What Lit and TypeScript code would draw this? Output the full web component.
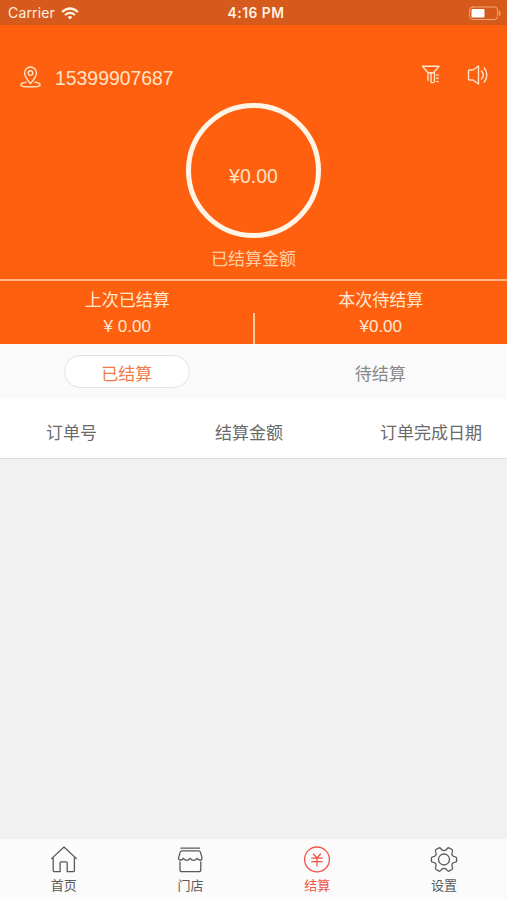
import { LitElement, html, css, svg } from "lit";
import { customElement, state } from "lit/decorators.js";
import { classMap } from "lit/directives/class-map.js";

const NAV = [
  { label: "首页", icon: svg`<path d="M1.600 13.600 14 2l12.400 11.600M3.200 12.200v13.200q0 1.300 1.300 1.300h5.600V17.800q0-1 1-1h5.100q1 0 1 1v8.900h5.900q1.300 0 1.300-1.300V12.200"/>` },
  { label: "门店", icon: svg`<path d="M4 3.200h18.500M5 5.800h16.600q1.400 0 1.800 1.300l1.500 5.300q.6 2.500-1.600 2.600-2.200.2-3.300-1.700-1.500 2-3.400 2t-3.400-2q-1.500 2-3.400 2t-3.400-2q-1.200 1.900-3.200 1.700-2.100-.2-1.500-2.600l1.500-5.300q.4-1.300 1.800-1.300zM3 17v7.800q0 1.900 1.900 1.900h17q1.900 0 1.900-1.900V17"/>` },
  { label: "结算", icon: svg`<circle cx="14" cy="14.400" r="12.400"/><path d="M10.500 9l3.500 4L17.500 9M8.700 13.200h10.600M8.700 16.600h10.600M14 13.200v7.600"/>` },
  { label: "设置", icon: svg`<circle cx="14" cy="14.500" r="5.500"/><path d="M8.600 3.100Q9.800 2.300 10.800 3.600 12 5.700 14 5.700T17.200 3.600Q18.200 2.300 19.400 3.100L21.900 4.500Q23 5.300 22.400 6.800 21.300 8.900 22.300 10.400T25.500 11.900Q26.600 12.100 26.600 13.300V15.700Q26.600 16.900 25.500 17.100 23.300 17.100 22.300 18.600T22.400 22.200Q23 23.700 21.900 24.500L19.400 25.900Q18.200 26.700 17.200 25.400 16 23.300 14 23.300T10.800 25.400Q9.800 26.700 8.600 25.900L6.100 24.500Q5 23.700 5.600 22.200 6.700 20.100 5.700 18.600T2.500 17.100Q1.400 16.900 1.400 15.700V13.300Q1.400 12.100 2.500 11.900 4.700 11.900 5.700 10.400T5.600 6.800Q5 5.300 6.100 4.500Z"/>` },
];

@customElement("app-root")
export class AppRoot extends LitElement {
  @state() private tab = 0;
  @state() private page = 2;

  static styles = css`
    :host {
      display: flex;
      flex-direction: column;
      height: 900px;
      background: #f1f1f1;
      font-family: "Liberation Sans", "Noto Sans CJK SC", sans-serif;
      color: #6a6a6a;
      overflow: hidden;
    }
    svg { display: block; fill: none; stroke: currentColor; stroke-linecap: round; stroke-linejoin: round; }
    .status {
      height: 25px;
      flex: none;
      box-sizing: border-box;
      padding: 1px 6px 0 8px;
      display: grid;
      grid-template-columns: 1fr auto 1fr;
      align-items: center;
      background: #d55a1b;
      color: #fff0e0;
      font-family: Inter, sans-serif;
      font-size: 14px;
      line-height: 24px;
    }
    .carrier { display: flex; align-items: center; gap: 6px; letter-spacing: .15px; }
    .wifi { stroke-linecap: butt; stroke-width: 2.2; }
    .time { font-weight: 600; font-size: 13.8px; letter-spacing: .5px; margin-left: 3px; }
    .battery { justify-self: end; }
    .hero {
      height: 254px;
      flex: none;
      background: #ff600f;
      color: #ffe3c6;
      display: flex;
      flex-direction: column;
      align-items: center;
    }
    .account {
      align-self: stretch;
      margin-top: 38px;
      height: 28px;
      padding: 0 18px 0 20px;
      display: flex;
      align-items: center;
    }
    .phone { flex: 1; margin-left: 14px; font-size: 19.4px; line-height: 28px; padding-top: 1px; }
    .filter { margin-right: 26px; }
    .filter, .sound { margin-bottom: 5px; }
    .ring {
      width: 135px;
      height: 135px;
      box-sizing: border-box;
      margin-top: 12px;
      padding-top: 11px;
      border: 5px solid #fff5e6;
      border-radius: 50%;
      display: flex;
      align-items: center;
      justify-content: center;
      font-size: 19.5px;
    }
    .caption { margin-top: 9px; font-size: 17px; line-height: 25px; color: #ffd0a8; }
    .stats {
      height: 65px;
      flex: none;
      box-sizing: border-box;
      border-top: 2px solid #ffb98a;
      background: #ff600f;
      color: #ffe9d2;
      display: grid;
      grid-template-columns: 1fr 2px 1fr;
      font-size: 17px;
      line-height: 26px;
      text-align: center;
    }
    .stat { padding-top: 7px; }
    .stat:first-child { padding-left: 2px; }
    .rule { align-self: end; height: 31px; background: #ffc9a0; }
    .tabs {
      height: 55px;
      flex: none;
      display: grid;
      grid-template-columns: 1fr 1fr;
      place-items: center;
      background: #fafafa;
      font-size: 17px;
      color: #888;
    }
    .tab {
      width: 126px;
      height: 33px;
      box-sizing: border-box;
      border: 1px solid transparent;
      border-radius: 17px;
      line-height: 37px;
      text-align: center;
    }
    .tab.on { background: #fff; border-color: #e2e2e2; color: #f27b4b; }
    .columns {
      height: 60px;
      flex: none;
      box-sizing: border-box;
      padding: 6px 25px 0 46px;
      border-bottom: 1px solid #dcdcdc;
      background: #fff;
      display: grid;
      grid-template-columns: 169px 1fr auto;
      align-items: center;
      font-size: 17px;
    }
    .list { flex: 1; }
    .nav {
      height: 61px;
      flex: none;
      display: grid;
      grid-template-columns: repeat(4, 1fr);
      background: #fbfbfb;
      color: #5a5a5a;
    }
    .item { display: flex; flex-direction: column; align-items: center; padding-top: 6px; font-size: 13px; line-height: 18px; }
    .item span { padding-left: 1px; }
    .item svg { stroke-width: 1.3; margin-bottom: 4px; margin-left: 1px; }
    .item.on { color: #ee5547; }
  `;

  render() {
    return html`
      <div class="status">
        <div class="carrier"><span>Carrier</span>
          <svg class="wifi" width="18" height="13" viewBox="0 0 18 13"><path d="M1 5Q9-2 17 5M4 8q5-4.200 10 0"/><path d="M6.600 10q2.400-1.900 4.800 0L9 12.500z" fill="currentColor" stroke="none"/></svg>
        </div>
        <span class="time">4:16 PM</span>
        <svg class="battery" width="32" height="15" viewBox="0 0 32 15"><rect x=".6" y="1" width="28" height="12.500" rx="3" stroke="#f4a878"/><rect x="2.500" y="3" width="13" height="8.600" rx="1" fill="#fff" stroke="none"/><path d="M30.700 5.500v3.500" stroke="#f4a878" stroke-width="1.300"/></svg>
      </div>
      <div class="hero">
        <div class="account">
          <svg width="21" height="24" viewBox="0 0 21 24" stroke-width="1.400"><path d="M10.500 18.500C7 14.500 4.500 11.300 4.500 8a6 6 0 0 1 12 0c0 3.300-2.500 6.500-6 10.500zM6 17.300c-6.500.8-7 4.200 0 4.400h9c7-.2 6.500-3.600 0-4.400"/><circle cx="10.500" cy="8" r="2.300"/></svg>
          <span class="phone">15399907687</span>
          <svg class="filter" width="20" height="24" viewBox="0 0 20 24" stroke-width="1.400"><path d="M1.500 3.300h16.500l-5.500 6.500H7zM7 9.800v7.500M10 10.300v9.300h2q1.500 0 1.500-1.600v-8M15.800 12h1.400M15.800 15.300h1.400M15.800 18.600h1.400"/></svg>
          <svg class="sound" width="22" height="24" viewBox="0 0 22 24" stroke-width="1.400"><path d="M2.500 7h3.500l5.500-4v18L6 17H2.500q-1 0-1-1V8q0-1 1-1zM14.500 8q3.500 4 0 8M17.300 5q5 7 0 14"/></svg>
        </div>
        <div class="ring">¥0.00</div>
        <div class="caption">已结算金额</div>
      </div>
      <div class="stats">
        <div class="stat"><div>上次已结算</div><div>¥ 0.00</div></div>
        <div class="rule"></div>
        <div class="stat"><div>本次待结算</div><div>¥0.00</div></div>
      </div>
      <div class="tabs">
        ${["已结算", "待结算"].map((t, i) => html`<div class=${classMap({ tab: true, on: i === this.tab })} @click=${() => (this.tab = i)}>${t}</div>`)}
      </div>
      <div class="columns"><span>订单号</span><span>结算金额</span><span>订单完成日期</span></div>
      <div class="list"></div>
      <div class="nav">
        ${NAV.map((n, i) => html`<div class=${classMap({ item: true, on: i === this.page })} @click=${() => (this.page = i)}>
          <svg width="28" height="28" viewBox="0 0 28 28">${n.icon}</svg><span>${n.label}</span></div>`)}
      </div>
    `;
  }
}
